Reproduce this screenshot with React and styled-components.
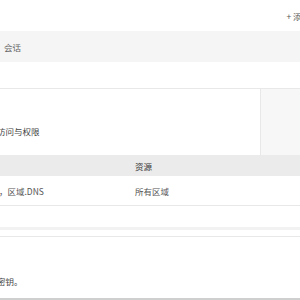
import React from 'react';
import styled, { createGlobalStyle } from 'styled-components';

const Global = createGlobalStyle`
  html, body {
    margin: 0;
    padding: 0;
    background: #fff;
  }
  body {
    font-family: "Noto Sans CJK SC", "Noto Sans", sans-serif;
    font-size: 8.5px;
    color: #444;
  }
`;

const Page = styled.div`
  width: 300px;
  height: 300px;
  overflow: hidden;
  display: flex;
  flex-direction: column;
`;

const Toolbar = styled.div`
  height: 31px;
  display: flex;
  align-items: center;
  justify-content: flex-end;
`;

const AddButton = styled.span`
  margin-right: -10px;
  color: #555;
  white-space: nowrap;
  padding-top: 1px;
`;

const TabBar = styled.div`
  height: 31px;
  background: #f5f5f5;
  display: flex;
  align-items: center;
  padding-left: 4px;
  color: #666;
`;

const Spacer = styled.div`
  height: ${p => p.h}px;
  flex-shrink: 0;
`;

const Panel = styled.div`
  border-top: 1px solid #e8e8e8;
  display: flex;
  height: 66px;
`;

const PanelMain = styled.div`
  flex: 1;
  display: flex;
  align-items: flex-end;
  padding-bottom: 18px;
  margin-left: -3px;
`;

const PanelSide = styled.div`
  width: 39px;
  border-left: 1px solid #e8e8e8;
  background: #f7f7f7;
`;

const HeadRow = styled.div`
  height: 21px;
  background: #ebebeb;
  display: grid;
  grid-template-columns: 135px 1fr;
  align-items: center;
  color: #333;
`;

const Row = styled.div`
  height: 29px;
  display: grid;
  grid-template-columns: 135px 1fr;
  align-items: center;
  border-bottom: 1px solid #e8e8e8;
  color: #555;
`;

const Cell = styled.span`
  white-space: nowrap;
  margin-left: ${p => p.shift || 0}px;
`;

const Band = styled.div`
  height: 3px;
  background: #f2f2f2;
`;

const Note = styled.div`
  flex: 1;
  border-top: 1px solid #e8e8e8;
  border-bottom: 2px solid #cfcfcf;
  display: flex;
  align-items: flex-end;
  padding-bottom: 11px;
  margin-left: -3px;
  color: #444;
`;

export default function App() {
  return (
    <Page>
      <Global />
      <Toolbar>
        <AddButton>+ 添加</AddButton>
      </Toolbar>
      <TabBar>会话</TabBar>
      <Spacer h={26} />
      <Panel>
        <PanelMain>访问与权限</PanelMain>
        <PanelSide />
      </Panel>
      <HeadRow>
        <Cell />
        <Cell>资源</Cell>
      </HeadRow>
      <Row>
        <Cell shift={-1}>，区域.DNS</Cell>
        <Cell>所有区域</Cell>
      </Row>
      <Spacer h={21} />
      <Band />
      <Spacer h={6} />
      <Note>密钥。</Note>
    </Page>
  );
}
